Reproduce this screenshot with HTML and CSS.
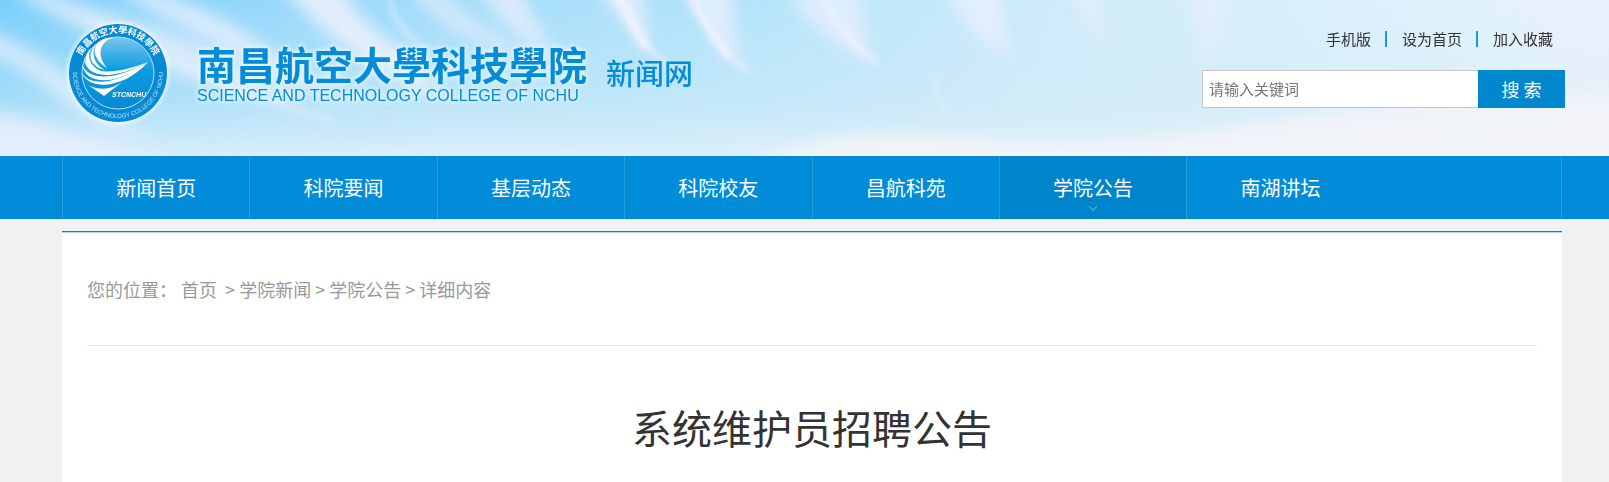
FILE: index.html
```
<!DOCTYPE html>
<html lang="zh-CN">
<head>
<meta charset="utf-8">
<title>系统维护员招聘公告</title>
<link rel="stylesheet" href="styles.css">
</head>
<body>
<header class="header">
  <svg class="sky" viewBox="0 0 1609 156" preserveAspectRatio="xMidYMid slice" aria-hidden="true">
    <defs>
      <linearGradient id="skyAcross" x1="0" x2="1" y1="0" y2="0">
        <stop offset="0" stop-color="#78cffa"/>
        <stop offset=".2" stop-color="#9bdafa"/>
        <stop offset=".45" stop-color="#b2e3fa"/>
        <stop offset=".65" stop-color="#cdebfa"/>
        <stop offset=".85" stop-color="#dcf0fb"/>
        <stop offset="1" stop-color="#e9f5fc"/>
      </linearGradient>
      <linearGradient id="skyDown" x1="0" x2="0" y1="0" y2="1">
        <stop offset="0" stop-color="#d5ecf7" stop-opacity="0"/>
        <stop offset=".65" stop-color="#d5ecf7" stop-opacity=".5"/>
        <stop offset="1" stop-color="#e6f2f9" stop-opacity=".85"/>
      </linearGradient>
      <filter id="soft" x="-30%" y="-30%" width="160%" height="160%"><feGaussianBlur stdDeviation="8"/></filter>
      <filter id="fine" x="-30%" y="-30%" width="160%" height="160%"><feGaussianBlur stdDeviation="3"/></filter>
    </defs>
    <rect width="1609" height="156" fill="url(#skyAcross)"/>
    <rect width="1609" height="156" fill="url(#skyDown)"/>
    <g fill="#e9effc" filter="url(#soft)">
      <path opacity=".75" d="M40-10 Q100 10 150 25 T310 110 Q200 90 120 50 T10-10Z"/>
      <path opacity=".8" d="M150-10 Q220 10 270 50 T390 110 Q290 90 240 60 T110-10Z"/>
      <path opacity=".9" d="M275-20 L340-20 Q350 20 420 60 L440 100 Q340 60 275-20Z"/>
      <path opacity=".6" d="M400-20 L440-20 Q460 20 540 60 Q450 50 400-20Z"/>
      <path opacity=".75" d="M470-20 L520-20 Q530 20 560 60 Q510 40 470-20Z"/>
      <path opacity=".7" d="M-20 25 Q60 60 110 110 T230 156 Q120 150 60 100 T-20 60Z"/>
      <path opacity=".8" d="M-20 110 Q60 120 180 170 L-20 170Z"/>
      <path opacity=".8" d="M590-20 L640-20 L650 55Z"/>
      <path opacity=".8" d="M680-20 L730-20 L740 70 Q710 40 680-20Z"/>
      <path opacity=".7" d="M780-20 L860-20 L870 60 Q810 40 780-20Z"/>
      <path opacity=".8" d="M940-20 L1000-20 L1010 60 Q960 30 940-20Z"/>
      <path opacity=".6" d="M1060-20 L1100-20 L1110 60Z"/>
      <path opacity=".6" d="M1180-20 L1240-20 L1210 70Z"/>
      <path opacity=".6" d="M1500-20 L1620-20 L1620 100 L1560 80Z"/>
    </g>
    <g fill="none" stroke="#f3f3fe" stroke-linecap="round" filter="url(#fine)">
      <path stroke-width="10" opacity=".8" d="M615-10 Q630 20 645 45"/>
      <path stroke-width="4" opacity=".8" d="M635 25 Q645 48 665 63"/>
      <path stroke-width="9" opacity=".8" d="M688-10 Q705 25 728 55"/>
      <path stroke-width="4" opacity=".7" d="M710 32 Q725 55 750 72"/>
      <path stroke-width="7" opacity=".6" d="M820-10 Q835 30 875 62"/>
      <path stroke-width="4" opacity=".4" d="M934 75 Q932 95 952 118"/>
      <path stroke-width="5" opacity=".5" d="M390 0 Q395 30 430 50"/>
      <path stroke-width="4" opacity=".5" d="M90 20 Q220 90 330 120"/>
    </g>
    <g fill="#f4f4f8" filter="url(#soft)">
      <path opacity=".85" d="M740 170 Q830 122 960 138 T1250 125 T1640 90 V180Z"/>
    </g>
  </svg>
  <div class="wrap header-inner">
    <a class="brand" href="#">
      <svg class="emblem" viewBox="0 0 108 108" role="img" aria-label="STCNCHU">
        <defs>
          <linearGradient id="disc" x1="0" y1="0" x2="0" y2="1">
            <stop offset="0" stop-color="#7cc6ec"/>
            <stop offset=".45" stop-color="#0b9de0"/>
            <stop offset="1" stop-color="#0787d2"/>
          </linearGradient>
          <path id="arcTop" d="M14 54 A40 40 0 0 1 94 54"/>
          <path id="arcBottom" d="M9 54 A45 45 0 0 0 99 54"/>
          <filter id="glow" x="-10%" y="-10%" width="120%" height="120%"><feGaussianBlur stdDeviation="2"/></filter>
        </defs>
        <circle cx="54" cy="54" r="51" fill="#fff" opacity=".7" filter="url(#glow)"/>
        <circle cx="54" cy="54" r="49" fill="#078ad6"/>
        <circle cx="54" cy="54" r="36" fill="url(#disc)" stroke="#b5e0f7" stroke-width="1"/>
        <g fill="#fff">
          <path d="M49 19 C36 22 32 36 43 49 C30 41 27 29 36 22 C40 19 45 18 49 19Z"/>
          <path d="M33 24 C26 34 30 45 41 51 C27 48 21 36 33 24Z"/>
          <path d="M27 29 C22 39 27 49 40 53 C23 52 16 40 27 29Z"/>
          <path d="M20 37 C22 53 43 59 84 43 C49 62 20 60 20 37Z"/>
          <path d="M18 45 C23 60 47 64 84 43 C54 67 21 67 18 45Z"/>
          <path d="M18 54 C26 67 52 67 84 43 C60 70 25 72 18 54Z"/>
          <path d="M20 63 C27 69 36 71 45 69 C58 66 72 52 84 43 L40 77Z"/>
        </g>
        <text class="emblem-name"><textPath href="#arcTop" startOffset="50%" text-anchor="middle">南昌航空大學科技學院</textPath></text>
        <text class="emblem-latin"><textPath href="#arcBottom" startOffset="50%" text-anchor="middle">SCIENCE AND TECHNOLOGY COLLEGE OF NCHU</textPath></text>
        <text class="emblem-code" x="48" y="78">STCNCHU</text>
      </svg>
      <span class="brand-text">
        <span class="brand-name">南昌航空大學科技學院</span>
        <span class="brand-latin">SCIENCE AND TECHNOLOGY COLLEGE OF NCHU</span>
      </span>
      <span class="brand-site">新闻网</span>
    </a>
    <div class="tools">
      <ul class="quick">
        <li><a href="#">手机版</a></li>
        <li><a href="#">设为首页</a></li>
        <li><a href="#">加入收藏</a></li>
      </ul>
      <form class="search">
        <input class="search-box" type="text" aria-label="请输入关键词" placeholder="请输入关键词">
        <button class="search-button" type="button">搜 索</button>
      </form>
    </div>
  </div>
</header>
<nav class="nav">
  <div class="wrap">
    <div class="nav-list">
      <a href="#">新闻首页</a>
      <a href="#">科院要闻</a>
      <a href="#">基层动态</a>
      <a href="#">科院校友</a>
      <a href="#">昌航科苑</a>
      <a class="active" href="#">学院公告<svg class="chevron" viewBox="0 0 10 7" aria-hidden="true"><path d="M1 1 L5 5.5 L9 1"/></svg></a>
      <a href="#">南湖讲坛</a>
    </div>
  </div>
</nav>
<main class="wrap">
  <article class="card">
    <div class="crumbs">您的位置： <a href="#">首页</a>&nbsp; &gt; <a href="#">学院新闻</a> &gt; <a href="#">学院公告</a> &gt; 详细内容</div>
    <h1 class="title">系统维护员招聘公告</h1>
  </article>
</main>
</body>
</html>
```

FILE: styles.css
```
* { box-sizing: border-box; }
body {
  margin: 0;
  background: #f1f1f1;
  color: #333;
  font-family: "Noto Sans CJK SC", sans-serif;
  overflow-x: hidden;
}
a { color: inherit; text-decoration: none; }
.wrap { padding: 0 47px 0 62px; }

.header { position: relative; overflow: hidden; }
.sky { position: absolute; inset: 0; width: 100%; height: 100%; }
.header-inner {
  position: relative;
  display: flex;
  justify-content: space-between;
  align-items: flex-start;
  padding-right: 44px;
  padding-bottom: 29px;
}
.brand { display: flex; align-items: flex-start; color: #058cd8; padding-top: 19px; }
.emblem { width: 108px; height: 108px; flex: none; margin-left: 2px; }
.emblem-name { font: 700 9px "Noto Sans CJK TC", sans-serif; fill: #fff; }
.emblem-latin { font: 6px "Liberation Sans", sans-serif; fill: #b5e0f7; }
.emblem-code { font: italic 700 7px "Liberation Sans", sans-serif; fill: #fff; }
.brand-text {
  display: flex;
  flex-direction: column;
  margin: 21px 0 0 25px;
  text-shadow: 0 0 4px #e8f6fd, 0 0 6px #e8f6fd;
}
.brand-name { font: 700 39px/46px "Noto Sans CJK TC", sans-serif; }
.brand-latin { margin-top: 1px; font: 16px/18px "Liberation Sans", sans-serif; }
.brand-site { margin: 33px 0 0 19px; font-size: 29px; line-height: 40px; font-weight: 500; }

.tools { display: flex; flex-direction: column; align-items: flex-end; padding-top: 28px; }
.quick { display: flex; margin: 0 12px 0 0; padding: 0; list-style: none; font-size: 15px; line-height: 22px; }
.quick li { display: flex; align-items: center; }
.quick li + li::before { content: ""; width: 2px; height: 16px; margin: 0 15px 0 14px; background: #1a97dd; }
.search { display: flex; margin-top: 20px; }
.search-box {
  width: 276px;
  height: 38px;
  padding: 0 6px 2px;
  border: 1px solid #c8c8c8;
  border-right: 0;
  background: #fff;
  font: 15px "Noto Sans CJK SC", sans-serif;
}
.search-box::placeholder { color: #757575; opacity: 1; }
.search-button {
  width: 87px;
  height: 38px;
  padding: 0;
  border: 0;
  background: #0087ce;
  color: #fff;
  font: 18px "Noto Sans CJK SC", sans-serif;
}

.nav { background: #008cd9; }
.nav-list { display: grid; grid-template-columns: repeat(8, 1fr); border-right: 1px solid #269ddf; }
.nav-list a {
  position: relative;
  border-left: 1px solid #269ddf;
  color: #fff;
  font-size: 20px;
  line-height: 63px;
  text-align: center;
}
.nav-list .active { background: #0085cc; }
.chevron { position: absolute; left: 50%; bottom: 7px; width: 10px; height: 7px; margin-left: -5px; fill: none; stroke: #7cc2e7; }

.card { margin-top: 12px; padding: 0 25px 30px; background: #fff; border-top: 1px solid #0087ce; box-shadow: inset 0 1px #b3dbf0; }
.crumbs { padding: 40px 0 39px; border-bottom: 1px solid #e4e4e4; color: #999; font-size: 18px; line-height: 34px; }
.title { margin: 49px 0 0; font-size: 40px; line-height: 64px; font-weight: 400; text-align: center; }
```
